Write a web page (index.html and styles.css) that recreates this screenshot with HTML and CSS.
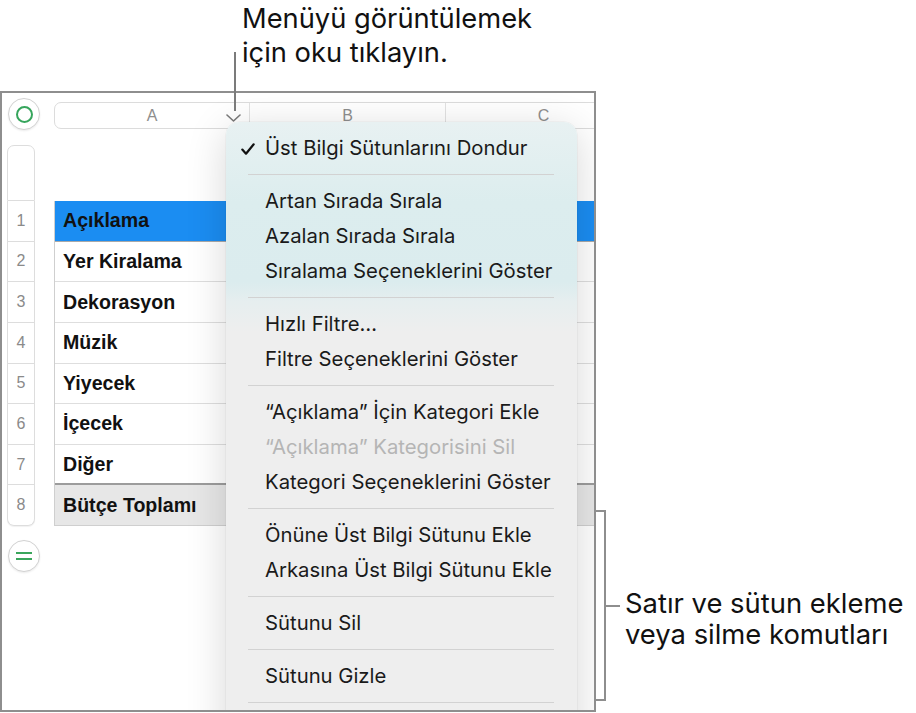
FILE: index.html
```html
<!DOCTYPE html>
<html lang="tr">
<head>
<meta charset="utf-8">
<title>Menü</title>
<link rel="stylesheet" href="styles.css">
</head>
<body>
<div class="page">
  <div class="callout-top">Menüyü görüntülemek<br>için oku tıklayın.</div>
  <div class="leader"></div>

  <div class="frame">
    <div class="trow row-head">
      <div class="gutter"><span class="circle-btn"><span class="ring"></span></span></div>
      <div class="col-header">
        <div class="ch ch-a"><span class="ch-letter">A</span><svg class="chev" width="15" height="8" viewBox="0 0 15 8"><path d="M1 1 L7.5 7 L14 1" fill="none" stroke="#7a7a7a" stroke-width="1.6" stroke-linecap="round" stroke-linejoin="round"/></svg></div>
        <div class="ch">B</div>
        <div class="ch">C</div>
      </div>
    </div>

    <div class="trow row-cap">
      <div class="gutter"><div class="rh rh-cap"></div></div>
    </div>

    <div class="trow">
      <div class="gutter"><div class="rh">1</div></div>
      <div class="cells head-row"><div class="cell">Açıklama</div><div class="cell"></div><div class="cell"></div></div>
    </div>
    <div class="trow">
      <div class="gutter"><div class="rh">2</div></div>
      <div class="cells"><div class="cell">Yer Kiralama</div><div class="cell"></div><div class="cell"></div></div>
    </div>
    <div class="trow">
      <div class="gutter"><div class="rh">3</div></div>
      <div class="cells"><div class="cell">Dekorasyon</div><div class="cell"></div><div class="cell"></div></div>
    </div>
    <div class="trow">
      <div class="gutter"><div class="rh">4</div></div>
      <div class="cells"><div class="cell">Müzik</div><div class="cell"></div><div class="cell"></div></div>
    </div>
    <div class="trow">
      <div class="gutter"><div class="rh">5</div></div>
      <div class="cells"><div class="cell">Yiyecek</div><div class="cell"></div><div class="cell"></div></div>
    </div>
    <div class="trow">
      <div class="gutter"><div class="rh">6</div></div>
      <div class="cells"><div class="cell">İçecek</div><div class="cell"></div><div class="cell"></div></div>
    </div>
    <div class="trow">
      <div class="gutter"><div class="rh">7</div></div>
      <div class="cells pre-total"><div class="cell">Diğer</div><div class="cell"></div><div class="cell"></div></div>
    </div>
    <div class="trow">
      <div class="gutter"><div class="rh rh-last">8</div></div>
      <div class="cells total-row"><div class="cell">Bütçe Toplamı</div><div class="cell"></div><div class="cell"></div></div>
    </div>

    <div class="trow row-add">
      <div class="gutter"><span class="circle-btn"><span class="eq"><i></i><i></i></span></span></div>
    </div>

    <div class="menu">
      <div class="item"><span class="mark"><svg width="14" height="12" viewBox="0 0 14 12"><path d="M1.3 6.6 L5 10.7 L12.7 1.3" fill="none" stroke="#111" stroke-width="2.2" stroke-linecap="round" stroke-linejoin="round"/></svg></span>Üst Bilgi Sütunlarını Dondur</div>
      <div class="sep"></div>
      <div class="item"><span class="mark"></span>Artan Sırada Sırala</div>
      <div class="item"><span class="mark"></span>Azalan Sırada Sırala</div>
      <div class="item"><span class="mark"></span>Sıralama Seçeneklerini Göster</div>
      <div class="sep"></div>
      <div class="item"><span class="mark"></span>Hızlı Filtre…</div>
      <div class="item"><span class="mark"></span>Filtre Seçeneklerini Göster</div>
      <div class="sep"></div>
      <div class="item"><span class="mark"></span>“Açıklama” İçin Kategori Ekle</div>
      <div class="item disabled"><span class="mark"></span>“Açıklama” Kategorisini Sil</div>
      <div class="item"><span class="mark"></span>Kategori Seçeneklerini Göster</div>
      <div class="sep"></div>
      <div class="item"><span class="mark"></span>Önüne Üst Bilgi Sütunu Ekle</div>
      <div class="item"><span class="mark"></span>Arkasına Üst Bilgi Sütunu Ekle</div>
      <div class="sep"></div>
      <div class="item"><span class="mark"></span>Sütunu Sil</div>
      <div class="sep"></div>
      <div class="item"><span class="mark"></span>Sütunu Gizle</div>
      <div class="sep"></div>
    </div>
  </div>

  <div class="callout-right">
    <div class="bracket"></div>
    <div class="tick"></div>
    <div class="callout-right-text">Satır ve sütun ekleme<br>veya silme komutları</div>
  </div>
</div>
</body>
</html>
```

FILE: styles.css
```css
html, body {
  margin: 0;
  padding: 0;
  background: #ffffff;
}

body {
  font-family: Inter, "Liberation Sans", sans-serif;
  color: #111111;
}

.page {
  position: relative;
  width: 916px;
  height: 713px;
  overflow: hidden;
  display: grid;
  grid-template-columns: 596px 1fr;
  grid-template-rows: 91px 622px;
}

.callout-top {
  grid-column: 1 / 3;
  grid-row: 1;
  padding: 2px 0 0 242px;
  font-size: 27.3px;
  line-height: 34px;
  white-space: nowrap;
}

.leader {
  position: absolute;
  left: 234px;
  top: 52px;
  width: 2px;
  height: 59px;
  background: #7b7b7b;
  z-index: 5;
}

/* ---------- framed screenshot ---------- */
.frame {
  grid-column: 1;
  grid-row: 2;
  position: relative;
  overflow: hidden;
  box-sizing: border-box;
  height: 621px;
  border: 2px solid #8e8e8e;
  background: #ffffff;
}

.trow {
  display: flex;
  height: 40.625px;
}

.gutter {
  width: 52px;
  flex: none;
  box-sizing: border-box;
  padding-left: 5px;
}

.row-head {
  height: 32px;
  margin-top: 5px;
}

.row-head .gutter {
  padding-left: 6px;
}

.circle-btn {
  width: 32px;
  height: 32px;
  box-sizing: border-box;
  border-radius: 50%;
  border: 1px solid #d2d2d2;
  box-shadow: 0 1px 2px rgba(0, 0, 0, 0.08);
  background: #ffffff;
  display: flex;
  align-items: center;
  justify-content: center;
}

.ring {
  width: 17px;
  height: 17px;
  box-sizing: border-box;
  border-radius: 50%;
  border: 2px solid #36a55c;
}

.eq {
  display: flex;
  flex-direction: column;
  gap: 3.5px;
}

.eq i {
  display: block;
  width: 16px;
  height: 2px;
  background: #3aa65c;
}

.col-header {
  display: flex;
  flex: none;
  height: 27px;
  margin-top: 4px;
  box-sizing: border-box;
  border: 1px solid #dcdcdc;
  border-radius: 7px 0 0 7px;
  background: #ffffff;
}

.ch {
  width: 196px;
  flex: none;
  box-sizing: border-box;
  border-right: 1px solid #e2e2e2;
  display: flex;
  align-items: center;
  justify-content: center;
  font-family: "Liberation Sans", Arial, sans-serif;
  font-size: 16px;
  color: #8e8e8e;
}

.ch-a {
  display: grid;
  grid-template-columns: 1fr auto 1fr;
  align-items: center;
  width: 195px;
}

.ch-a .ch-letter {
  grid-column: 2;
}

.ch-a .chev {
  grid-column: 3;
  justify-self: end;
  margin-right: 8px;
  margin-top: 5px;
}

.row-cap {
  height: 56px;
  margin-top: 15px;
}

.rh {
  width: 28px;
  height: 100%;
  box-sizing: border-box;
  border-left: 1px solid #dddddd;
  border-right: 1px solid #dddddd;
  border-bottom: 1px solid #dddddd;
  display: flex;
  align-items: center;
  justify-content: center;
  font-family: "Liberation Sans", Arial, sans-serif;
  font-size: 16px;
  color: #8a8a8a;
}

.rh-cap {
  border-top: 1px solid #dddddd;
  border-radius: 7px 7px 0 0;
}

.rh-last {
  border-radius: 0 0 7px 7px;
  box-shadow: 0 1px 1px rgba(0, 0, 0, 0.06);
}

.cells {
  display: flex;
  flex: none;
  border-left: 1px solid #cfcfcf;
}

.cell {
  width: 196px;
  flex: none;
  box-sizing: border-box;
  border-right: 1px solid #e0e0e0;
  border-bottom: 1px solid #dedede;
  display: flex;
  align-items: center;
  padding-left: 8px;
  font-family: "Liberation Sans", Arial, sans-serif;
  font-weight: bold;
  font-size: 19.6px;
  color: #111111;
  white-space: nowrap;
}

.head-row .cell {
  background: #1b8df2;
  border-right-color: #1b8df2;
  border-bottom-color: #a9a9a9;
}

.pre-total .cell {
  border-bottom: 2px solid #9c9c9c;
}

.total-row .cell {
  background: #e7e7e7;
  border-bottom-color: #cfcfcf;
}

.row-add {
  height: 32px;
  margin-top: 14px;
}

.row-add .gutter {
  padding-left: 6px;
}

/* ---------- popover menu ---------- */
.menu {
  position: absolute;
  left: 224px;
  top: 29px;
  width: 351px;
  height: 640px;
  box-sizing: border-box;
  padding-top: 8px;
  border-radius: 13px;
  background: linear-gradient(180deg,
    #e8f1f2 0px,
    #dcedee 80px,
    #dbecee 160px,
    #e6eeef 180px,
    #eeeeee 210px,
    #eeeeee 100%);
  box-shadow: 0 8px 40px rgba(0, 0, 0, 0.16), 0 0 0 0.5px rgba(0, 0, 0, 0.06);
  font-family: Inter, "Liberation Sans", sans-serif;
  font-size: 20.3px;
  color: #1a1a1a;
  z-index: 3;
}

.item {
  display: flex;
  align-items: center;
  height: 35px;
  padding-left: 15px;
  white-space: nowrap;
}

.mark {
  width: 24px;
  flex: none;
  display: flex;
  align-items: center;
  padding-top: 2px;
}

.item.disabled {
  color: #b5b5b5;
}

.sep {
  height: 1px;
  margin: 9px 23px 8px 22px;
  background: #d2d2d2;
}

/* ---------- right callout ---------- */
.callout-right {
  grid-column: 2;
  grid-row: 2;
  display: flex;
  align-items: flex-start;
}

.bracket {
  flex: none;
  width: 10px;
  height: 191px;
  margin-top: 419px;
  box-sizing: border-box;
  border: 2px solid #8e8e8e;
  border-left: 0;
}

.tick {
  flex: none;
  width: 14px;
  height: 2px;
  margin-top: 514px;
  background: #8e8e8e;
}

.callout-right-text {
  margin: 497px 0 0 5px;
  font-size: 27.4px;
  line-height: 31px;
  white-space: nowrap;
}
```
